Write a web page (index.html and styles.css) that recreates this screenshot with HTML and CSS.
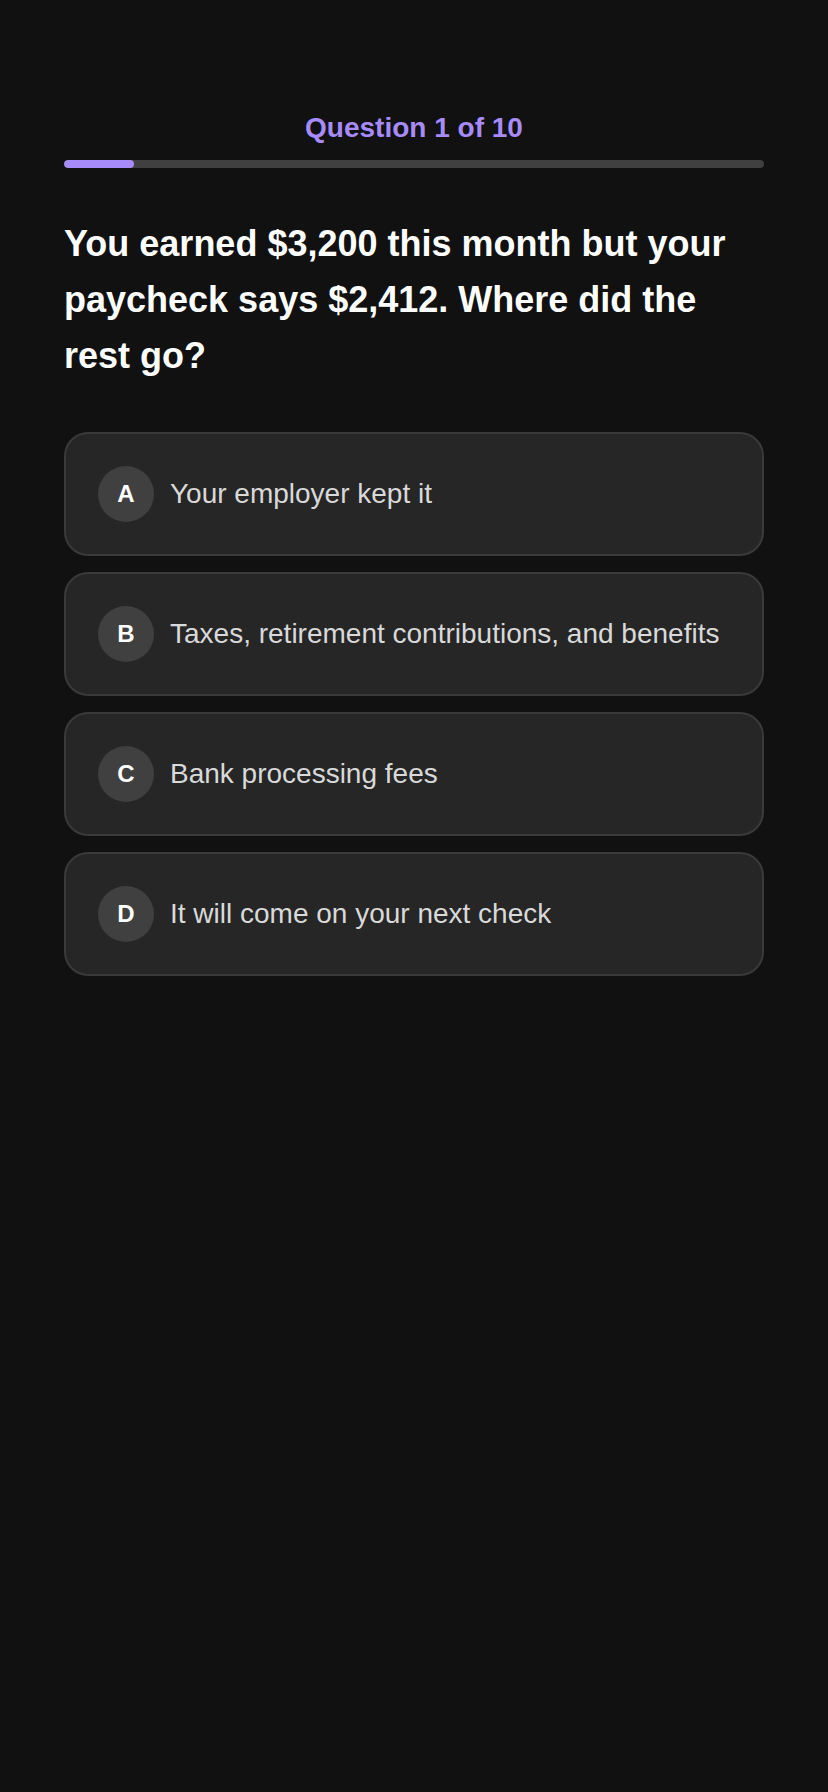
FILE: index.html
```html
<!DOCTYPE html>
<html lang="en">
<head>
    <meta charset="UTF-8">
    <meta name="viewport" content="width=device-width, initial-scale=1.0">
    <title>Paycheck Quiz</title>
    <link rel="stylesheet" href="styles.css">
</head>
<body>

<main class="quiz">
    <div class="progress-label">Question 1 of 10</div>
    <div class="progress-track">
        <div class="progress-fill" style="width: 10%;"></div>
    </div>

    <h1 class="question">You earned $3,200 this month but your paycheck says $2,412. Where did the rest go?</h1>

    <div class="options">
        <button class="option" type="button">
            <span class="option-letter">A</span>
            <span class="option-text">Your employer kept it</span>
        </button>
        <button class="option" type="button">
            <span class="option-letter">B</span>
            <span class="option-text">Taxes, retirement contributions, and benefits</span>
        </button>
        <button class="option" type="button">
            <span class="option-letter">C</span>
            <span class="option-text">Bank processing fees</span>
        </button>
        <button class="option" type="button">
            <span class="option-letter">D</span>
            <span class="option-text">It will come on your next check</span>
        </button>
    </div>
</main>

</body>
</html>
```

FILE: styles.css
```css
body {
    font-family: 'Liberation Sans', Arial, sans-serif;
    background-color: #111111;
    margin: 0;
    padding: 0;
    color: #ffffff;
}
.quiz {
    padding: 112px 64px 64px;
}
.progress-label {
    text-align: center;
    font-size: 28px;
    font-weight: bold;
    color: #a78bfa;
    line-height: 32px;
    margin-bottom: 16px;
}
.progress-track {
    height: 8px;
    background-color: #404040;
    border-radius: 4px;
    overflow: hidden;
}
.progress-fill {
    height: 100%;
    background-color: #a78bfa;
    border-radius: 4px;
}
.question {
    font-size: 36px;
    font-weight: bold;
    line-height: 56px;
    margin: 48px 0 48px;
    color: #ffffff;
}
.options {
    display: flex;
    flex-direction: column;
    gap: 16px;
}
.option {
    display: flex;
    align-items: center;
    gap: 16px;
    width: 100%;
    padding: 32px;
    background-color: #262626;
    border: 2px solid #3a3a3a;
    border-radius: 24px;
    font-family: inherit;
    text-align: left;
    cursor: pointer;
}
.option-letter {
    display: flex;
    align-items: center;
    justify-content: center;
    flex-shrink: 0;
    width: 56px;
    height: 56px;
    border-radius: 50%;
    background-color: #404040;
    color: #ffffff;
    font-size: 24px;
    font-weight: bold;
}
.option-text {
    font-size: 28px;
    color: #d9d9d9;
}
```
